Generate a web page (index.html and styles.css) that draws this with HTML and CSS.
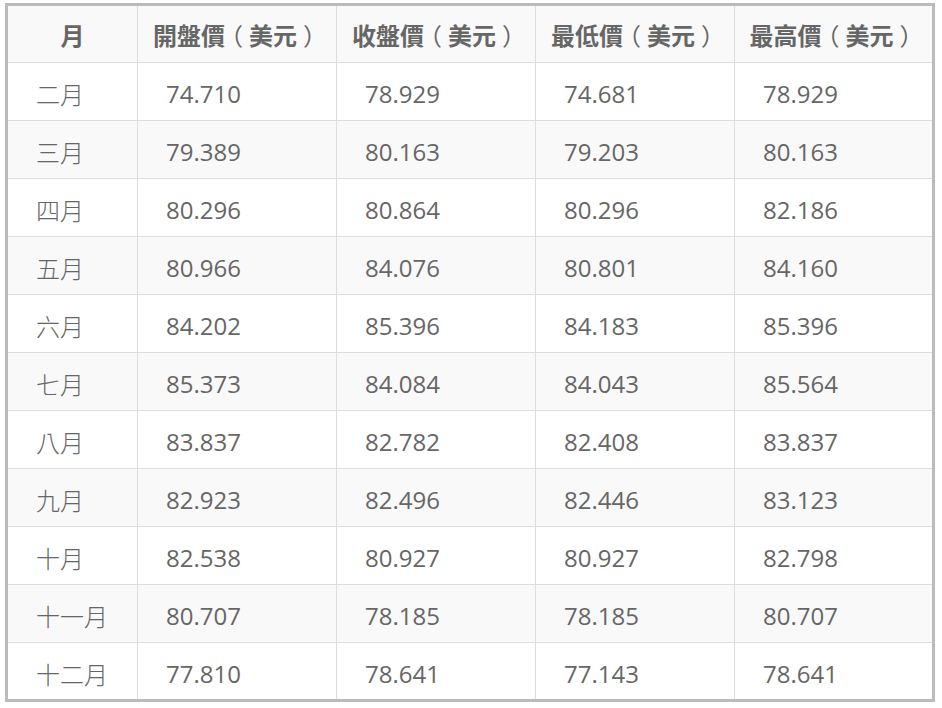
FILE: index.html
```html
<!DOCTYPE html>
<html lang="zh-Hant">
<head>
<meta charset="utf-8">
<link rel="stylesheet" href="styles.css">
</head>
<body>
<div class="wrap">
<table class="prices">
<thead>
<tr><th class="m">月</th><th>開盤價<span class="p">（</span>美元<span class="p">）</span></th><th>收盤價<span class="p">（</span>美元<span class="p">）</span></th><th>最低價<span class="p">（</span>美元<span class="p">）</span></th><th>最高價<span class="p">（</span>美元<span class="p">）</span></th></tr>
</thead>
<tbody>
<tr><td>二月</td><td>74.710</td><td>78.929</td><td>74.681</td><td>78.929</td></tr>
<tr><td>三月</td><td>79.389</td><td>80.163</td><td>79.203</td><td>80.163</td></tr>
<tr><td>四月</td><td>80.296</td><td>80.864</td><td>80.296</td><td>82.186</td></tr>
<tr><td>五月</td><td>80.966</td><td>84.076</td><td>80.801</td><td>84.160</td></tr>
<tr><td>六月</td><td>84.202</td><td>85.396</td><td>84.183</td><td>85.396</td></tr>
<tr><td>七月</td><td>85.373</td><td>84.084</td><td>84.043</td><td>85.564</td></tr>
<tr><td>八月</td><td>83.837</td><td>82.782</td><td>82.408</td><td>83.837</td></tr>
<tr><td>九月</td><td>82.923</td><td>82.496</td><td>82.446</td><td>83.123</td></tr>
<tr><td>十月</td><td>82.538</td><td>80.927</td><td>80.927</td><td>82.798</td></tr>
<tr><td>十一月</td><td>80.707</td><td>78.185</td><td>78.185</td><td>80.707</td></tr>
<tr><td>十二月</td><td>77.810</td><td>78.641</td><td>77.143</td><td>78.641</td></tr>
</tbody>
</table>
</div>
</body>
</html>
```
FILE: styles.css
```css
html, body {
  margin: 0;
  padding: 0;
  background: #fff;
}
.wrap {
  padding: 3px 7px 0 5px;
}
.prices {
  width: 930px;
  border-collapse: collapse;
  border: 3px solid #bbbbbb;
  font-family: "Open Sans", "Noto Sans CJK TC", sans-serif;
  font-size: 24px;
  color: #666;
  table-layout: fixed;
}
.prices th, .prices td {
  border: 1px solid #dddddd;
  height: 58px;
  padding: 0;
  box-sizing: border-box;
}
.prices th {
  background: #f9f9f9;
  font-weight: 700;
  text-align: center;
  font-family: "Noto Sans CJK TC", sans-serif;
  font-size: 24px;
}
.prices th .p {
  font-feature-settings: "halt";
  font-weight: 400;
  margin: 0 0.25em;
}
.prices th.m { width: 131px; }
.prices td {
  text-align: left;
  padding-left: 28px;
  padding-top: 4px;
}
.prices td:first-child {
  font-family: "Noto Sans CJK TC", sans-serif;
  font-weight: 300;
}
.prices tbody tr:nth-child(even) td {
  background: #f9f9f9;
}
```
